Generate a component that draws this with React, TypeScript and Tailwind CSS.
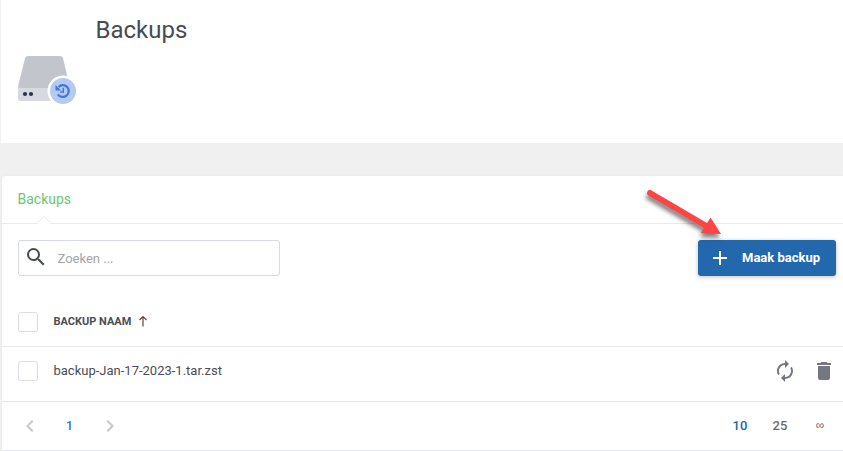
import React, { useState } from 'react';
import { MdAdd, MdAutorenew, MdChevronLeft, MdChevronRight, MdDelete, MdSearch } from 'react-icons/md';

interface Backup {
  name: string;
}

const backups: Backup[] = [{ name: 'backup-Jan-17-2023-1.tar.zst' }];

const pageSizes = ['10', '25', '∞'];

const BackupDriveIcon: React.FC = () => (
  <svg width="60" height="50" viewBox="0 0 60 50" className="block">
    <path d="M0 30h50v15H3a3 3 0 0 1-3-3z" fill="#d6d9e0" />
    <path d="M10 0h32c1.600 0 2.700 1 3.100 2.500L51 27v5H3C.8 32 0 30.500.4 28.500L7 2.500C7.400 1 8.500 0 10 0z" fill="#c2c5cc" />
    <circle cx="7" cy="38" r="2.100" fill="#2c3347" />
    <circle cx="13" cy="38" r="2.100" fill="#2c3347" />
    <circle cx="45" cy="35" r="15.500" fill="#fff" />
    <circle cx="45" cy="35" r="13" fill="#b5caf3" />
    {/* History arrow */}
    <path d="M40.500 31a5.900 5.900 0 1 1-.6 7.300" fill="none" stroke="#4376d8" strokeWidth="2.200" />
    <path d="M37.500 29v5.400h5.600z" fill="#4376d8" />
    <path d="M45.300 31.700v4.300h-3" fill="none" stroke="#4376d8" strokeWidth="1.500" />
  </svg>
);

const Checkbox: React.FC<{ checked: boolean; onChange: () => void; label: string }> = ({ checked, onChange, label }) => (
  <input
    type="checkbox"
    aria-label={label}
    checked={checked}
    onChange={onChange}
    className="block w-5 h-5 shrink-0 appearance-none rounded-[3px] border border-[#dcdce8] bg-white checked:bg-[#2367ad]"
  />
);

const App: React.FC = () => {
  const [query, setQuery] = useState('');
  const [selected, setSelected] = useState<string[]>([]);
  const [pageSize, setPageSize] = useState('10');

  const rows = backups.filter(b => b.name.toLowerCase().includes(query.toLowerCase()));
  const allSelected = rows.length > 0 && selected.length === rows.length;

  const toggle = (name: string) => {
    setSelected(prev => (prev.includes(name) ? prev.filter(n => n !== name) : [...prev, name]));
  };

  return (
    <div className="relative h-[451px] overflow-hidden bg-[#f0f0f0] font-['Roboto',sans-serif] text-[#4a4d55]">
      {/* Page header */}
      <header className="ml-px flex h-[143px] bg-white pl-[17px]">
        <div className="w-[77.500px] pt-14">
          <BackupDriveIcon />
        </div>
        <h1 className="pt-[14px] text-2xl leading-8 text-[#484b52]">Backups</h1>
      </header>

      {/* Backup list */}
      <main className="mt-[33px] ml-[2px] h-[275px] rounded-tl-[3px] border-b border-[#e6e6ee] bg-white shadow-[0_0_3px_rgba(0,0,0,0.04)]">
        <nav className="h-12 border-b border-[#e9e9ef] pl-[15.500px]">
          <button className="relative block h-[47px] pb-[2px] text-sm text-[#69c773]">
            Backups
            <svg width="16" height="9" viewBox="0 0 16 9" className="absolute -bottom-px left-[18.500px]">
              <path d="M1 8.500 8 1.500l7 7" fill="#fff" stroke="#e6e6ef" />
              <path d="M2 8.500h12" stroke="#fff" />
            </svg>
          </button>
        </nav>

        <div className="flex items-center justify-between pt-4 pr-[7px] pl-4">
          <label className="flex h-9 w-[262px] items-center rounded-[3px] border border-[#d9d9e6] pl-[4.500px]">
            <MdSearch className="-mt-[3px] h-6 w-6 text-[#484b52]" />
            <input
              value={query}
              onChange={e => setQuery(e.target.value)}
              placeholder="Zoeken ..."
              className="mt-px ml-[10px] w-[200px] text-[13px] outline-none placeholder:text-[#a5a5a9]"
            />
          </label>
          <button className="flex h-9 w-[138px] items-center rounded-[3px] bg-[#2367ad] pl-[10px] text-[13px] font-bold text-white shadow-[0_1px_4px_rgba(0,0,0,0.25)]">
            <MdAdd className="h-6 w-6" />
            <span className="ml-[10px]">Maak backup</span>
          </button>
        </div>

        <div className="mt-[22px] flex h-[49px] items-center border-b border-[#ececf0] pl-4">
          <Checkbox
            label="Alles selecteren"
            checked={allSelected}
            onChange={() => setSelected(allSelected ? [] : rows.map(r => r.name))}
          />
          <span className="ml-[15.500px] text-[11px] font-bold">BACKUP NAAM</span>
          <svg width="10" height="12" viewBox="0 0 10 12" className="-mt-[2px] ml-[6.500px]" fill="none" stroke="#6b4236" strokeWidth="1.200">
            <path d="M5 11.500V1.500M1.500 5 5 1.500 8.500 5" />
          </svg>
        </div>

        {rows.map(row => (
          <div key={row.name} className="flex h-[55px] border-b border-[#e6e6ec] pt-[14px] pl-4">
            <Checkbox label={row.name} checked={selected.includes(row.name)} onChange={() => toggle(row.name)} />
            <span className="ml-[15.500px] text-[13px] leading-5">{row.name}</span>
            <div className="-mt-[2px] mr-[7px] ml-auto flex gap-[15px] text-[#747780]">
              <button aria-label="Herstellen" className="h-6">
                <MdAutorenew className="h-6 w-6" />
              </button>
              <button aria-label="Verwijderen" className="h-6">
                <MdDelete className="h-6 w-6" />
              </button>
            </div>
          </div>
        ))}

        <footer className="flex h-12 items-center pr-[3px] pl-[7.500px] text-[13px]">
          <button aria-label="Vorige" className="flex w-10 justify-center">
            <MdChevronLeft className="h-6 w-6 text-[#c8c8c8]" />
          </button>
          <span className="w-10 text-center font-medium text-[#2d7bc4]">1</span>
          <button aria-label="Volgende" className="flex w-10 justify-center">
            <MdChevronRight className="h-6 w-6 text-[#c8c8c8]" />
          </button>
          <div className="ml-auto flex items-center">
            {pageSizes.map(size => (
              <button
                key={size}
                onClick={() => setPageSize(size)}
                className={`w-10 font-medium ${size === pageSize ? 'text-[#2367ad]' : 'text-[#686b70]'} ${size === '∞' ? "pb-[2px] font-['Liberation_Sans'] text-xs" : ''}`}
              >
                {size}
              </button>
            ))}
          </div>
        </footer>
      </main>

      {/* Pointer to the create button */}
      <svg width="90" height="60" viewBox="0 0 90 60" className="pointer-events-none absolute top-[184px] left-[640px] drop-shadow-[-1px_4px_2px_rgba(0,0,0,0.5)]">
        <path d="M10 9 68 43" stroke="#fd4546" strokeWidth="6" strokeLinecap="round" />
        <path d="M70.500 33.500 61 49l20 1z" fill="#fd4546" />
      </svg>
    </div>
  );
};

export default App;
